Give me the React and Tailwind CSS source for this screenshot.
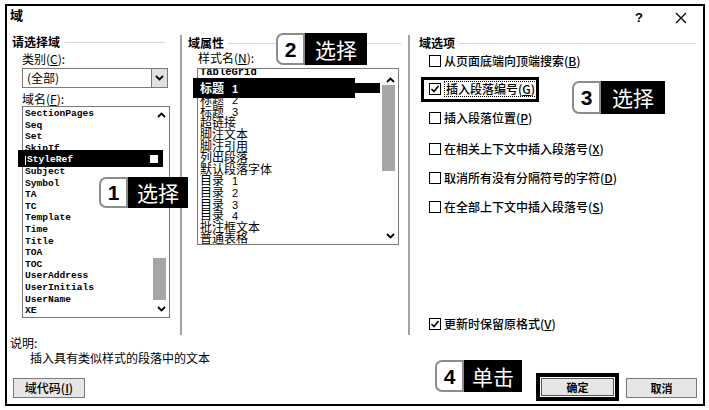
import React from 'react';

const fieldNames = ['SectionPages', 'Seq', 'Set', 'SkipIf', 'StyleRef', 'Subject', 'Symbol', 'TA', 'TC', 'Template', 'Time', 'Title', 'TOA', 'TOC', 'UserAddress', 'UserInitials', 'UserName', 'XE'];

const styleNames = ['TableGrid', '标题 1', '标题 2', '标题 3', '超链接', '脚注文本', '脚注引用', '列出段落', '默认段落字体', '目录 1', '目录 2', '目录 3', '目录 4', '批注框文本', '普通表格'];

const options = [
  { label: '从页面底端向顶端搜索', key: 'B' },
  { label: '插入段落编号', key: 'G', checked: true, boxed: true },
  { label: '插入段落位置', key: 'P' },
  { label: '在相关上下文中插入段落号', key: 'X' },
  { label: '取消所有没有分隔符号的字符', key: 'D' },
  { label: '在全部上下文中插入段落号', key: 'S' },
];

const Chevron = ({ up }) => (
  <svg width="9" height="6" viewBox="0 0 9 6">
    <polyline points={up ? '1,5 4.5,1.5 8,5' : '1,1 4.5,4.5 8,1'} fill="none" stroke="#000" strokeWidth="1.8" />
  </svg>
);

const CheckBox = ({ checked }) => (
  <div className="w-[12px] h-[12px] border-[1.5px] border-black bg-white flex items-center justify-center shrink-0">
    {checked && (
      <svg width="10" height="10" viewBox="0 0 10 10">
        <polyline points="1.5,5 4,7.5 8.5,2" fill="none" stroke="#000" strokeWidth="1.6" />
      </svg>
    )}
  </div>
);

const Callout = ({ n, label, className }) => (
  <div className={className}>
    <div className="w-[29px] h-full bg-white border-2 border-[#8c8c8c] rounded-l-[7px] flex items-center justify-center font-['Liberation_Sans_Narrow','Liberation_Sans',sans-serif] font-bold text-[21px] leading-none text-black">
      {n}
    </div>
    <div className="flex-1 h-full bg-black text-white text-[21px] leading-none flex items-center justify-center">
      {label}
    </div>
  </div>
);

const GroupHeader = ({ title, className }) => (
  <div className={className}>
    <span className="text-[12px] font-bold leading-none">{title}</span>
    <div className="flex-1 h-px bg-[#d4d4d4] ml-[4px]" />
  </div>
);

export default function App() {
  return (
    <div className="w-[709px] h-[410px] bg-white pt-[4px] pl-[5px] font-['Noto_Sans_CJK_SC',sans-serif] text-black">
      <div className="relative w-[700px] h-[402px] border-2 border-black flex flex-col">
        {/* title bar */}
        <div className="h-[27px] flex items-start justify-between pl-[3px] pr-[16px] pt-[1px]">
          <span className="text-[13px] font-bold leading-[16px]">域</span>
          <div className="flex items-center gap-[32px] pt-[3px]">
            <span className="text-[13px] font-bold leading-[16px] font-['Liberation_Sans',sans-serif]">?</span>
            <svg width="12" height="12" viewBox="0 0 12 12">
              <path d="M1 1 L11 11 M11 1 L1 11" stroke="#000" strokeWidth="1.3" />
            </svg>
          </div>
        </div>

        {/* columns */}
        <div className="flex h-[302px]">
          {/* left */}
          <div className="w-[173px] flex flex-col">
            <GroupHeader title="请选择域" className="h-[18px] flex items-center pl-[5px] pr-[15px]" />
            <div className="h-[14px] pl-[15px] text-[12px] leading-[14px] mt-[1px]">类别(<u>C</u>):</div>
            <div className="ml-[15px] mt-[2px] w-[146px] h-[20px] border border-[#7a7a7a] flex items-center">
              <span className="flex-1 pl-[4px] text-[12px] leading-none">(全部)</span>
              <div className="w-[16px] h-full bg-[#e1e1e1] border-l border-[#7a7a7a] flex items-center justify-center">
                <Chevron />
              </div>
            </div>
            <div className="h-[14px] pl-[15px] text-[12px] leading-[14px] mt-[4px]">域名(<u>F</u>):</div>
            <div className="relative ml-[15px] w-[148px] h-[212px] border border-[#7a7a7a] pt-[1px] pl-[2px] font-['Liberation_Mono',monospace] font-bold text-[9.6px] leading-[11.6px]">
              {fieldNames.map((name) =>
                name === 'StyleRef' ? (
                  <div key={name} className="relative h-[11.6px]">
                    <div className="absolute -left-[7px] -top-[4px] w-[145px] h-[17px] bg-black" />
                    <span className="relative flex items-center text-white">
                      <span className="w-px h-[9px] bg-white mr-[1px]" />
                      {name}
                    </span>
                    <div className="absolute left-[125px] top-[1px] w-[8px] h-[8px] bg-white" />
                  </div>
                ) : (
                  <div key={name} className="h-[11.6px]">{name}</div>
                )
              )}
              <div className="absolute right-[3px] top-[5px]"><Chevron up /></div>
              <div className="absolute right-[3px] top-[151px] w-[13px] h-[42px] bg-[#a6a6a6]" />
              <div className="absolute right-[3px] bottom-[5px]"><Chevron /></div>
            </div>
          </div>

          {/* middle */}
          <div className="w-[228px] flex flex-col border-l-2 border-[#a3a3a3] mt-[2px]">
            <GroupHeader title="域属性" className="h-[16px] flex items-center pl-[6px] pr-[7px]" />
            <div className="h-[14px] pl-[16px] text-[12px] leading-[14px]">样式名(<u>N</u>):</div>
            <div className="relative ml-[15px] mt-[3px] w-[202px] h-[177px] border border-[#7a7a7a]">
              <div className="h-full overflow-y-clip pl-[2px] pt-[1px] text-[12px] leading-[11.6px]">
                {styleNames.map((name, i) => {
                  if (i === 0)
                    return (
                      <div key={name} className="relative -top-[3px] h-[11.6px] font-['Liberation_Mono',monospace] font-bold text-[10.5px]">{name}</div>
                    );
                  const [a, b] = name.split(' ');
                  const text = (
                    <>
                      {a}
                      {b && <span className="ml-[8px] font-['Liberation_Sans',sans-serif] text-[11px]">{b}</span>}
                    </>
                  );
                  if (i === 1)
                    return (
                      <div key={name} className="relative h-[11.6px]">
                        <div className="absolute -left-[7px] -top-[4px] w-[162px] h-[20px] bg-black" />
                        <div className="absolute left-[155px] top-[1px] w-[25px] h-[10px] bg-black" />
                        <span className="relative text-white font-bold">{text}</span>
                      </div>
                    );
                  return (
                    <div key={name} className="h-[11.6px] whitespace-nowrap">{text}</div>
                  );
                })}
              </div>
              <div className="absolute right-[3px] top-[8px]"><Chevron up /></div>
              <div className="absolute right-[3px] top-[16px] w-[13px] h-[86px] bg-[#a6a6a6]" />
              <div className="absolute right-[3px] bottom-[5px]"><Chevron /></div>
            </div>
          </div>

          {/* right */}
          <div className="flex-1 flex flex-col border-l-2 border-[#a3a3a3] mt-[2px] pb-[2px]">
            <GroupHeader title="域选项" className="h-[16px] flex items-center pl-[9px] pr-[7px]" />
            {options.map((o, i) => (
              <div
                key={o.key}
                className={
                  i === 0 ? 'relative h-[18px] flex items-center gap-[3px] pl-[19px] mt-[1px]'
                  : i === 1 ? 'relative h-[18px] flex items-center gap-[3px] pl-[19px] mt-[10px]'
                  : i === 2 ? 'relative h-[18px] flex items-center gap-[3px] pl-[19px] mt-[11px]'
                  : i === 3 ? 'relative h-[18px] flex items-center gap-[3px] pl-[19px] mt-[13px]'
                  : 'relative h-[18px] flex items-center gap-[3px] pl-[19px] mt-[11px]'
                }
              >
                {o.boxed && <div className="absolute left-[11px] -top-[3px] w-[118px] h-[25px] border-[3px] border-black" />}
                <CheckBox checked={o.checked} />
                <span className={o.boxed ? 'text-[12px] font-medium leading-[14px] border border-dotted border-black px-px' : 'text-[12px] font-medium leading-[14px]'}>
                  {o.label}(<u>{o.key}</u>)
                </span>
              </div>
            ))}
            <div className="mt-auto h-[18px] flex items-center gap-[3px] pl-[19px]">
              <CheckBox checked />
              <span className="text-[12px] font-medium leading-[14px]">更新时保留原格式(<u>V</u>)</span>
            </div>
          </div>
        </div>

        {/* bottom */}
        <div className="flex-1 flex justify-between items-end pr-[6px] pb-[3px]">
          <div className="flex flex-col pl-[3px] h-full">
            <div className="h-[14px] text-[12px] leading-[14px] mt-[1px]">说明:</div>
            <div className="h-[16px] text-[12px] leading-[16px] pl-[20px]">插入具有类似样式的段落中的文本</div>
            <div className="mt-[12px] ml-[3px] w-[72px] h-[20px] bg-[#e6e6e6] border border-[#7a7a7a] flex items-center justify-center text-[12px] leading-none font-medium">
              域代码(<u>I</u>)
            </div>
          </div>
          <div className="flex items-end gap-[7px]">
            <div className="w-[83px] h-[28px] border-[4px] border-black bg-white p-[1px]">
              <div className="w-full h-full bg-[#e6e6e6] border border-[#555] flex items-center justify-center text-[11px] font-bold leading-none">确定</div>
            </div>
            <div className="w-[71px] h-[20px] mb-[3px] bg-[#e6e6e6] border border-[#7a7a7a] flex items-center justify-center text-[11px] font-bold leading-none">取消</div>
          </div>
        </div>

        {/* callouts */}
        <Callout n="1" label="选择" className="absolute left-[92px] top-[171px] w-[89px] h-[31px] flex" />
        <Callout n="2" label="选择" className="absolute left-[269px] top-[27px] w-[91px] h-[32px] flex" />
        <Callout n="3" label="选择" className="absolute left-[565px] top-[75px] w-[93px] h-[33px] flex" />
        <Callout n="4" label="单击" className="absolute left-[428px] top-[354px] w-[87px] h-[32px] flex" />
      </div>
    </div>
  );
}
